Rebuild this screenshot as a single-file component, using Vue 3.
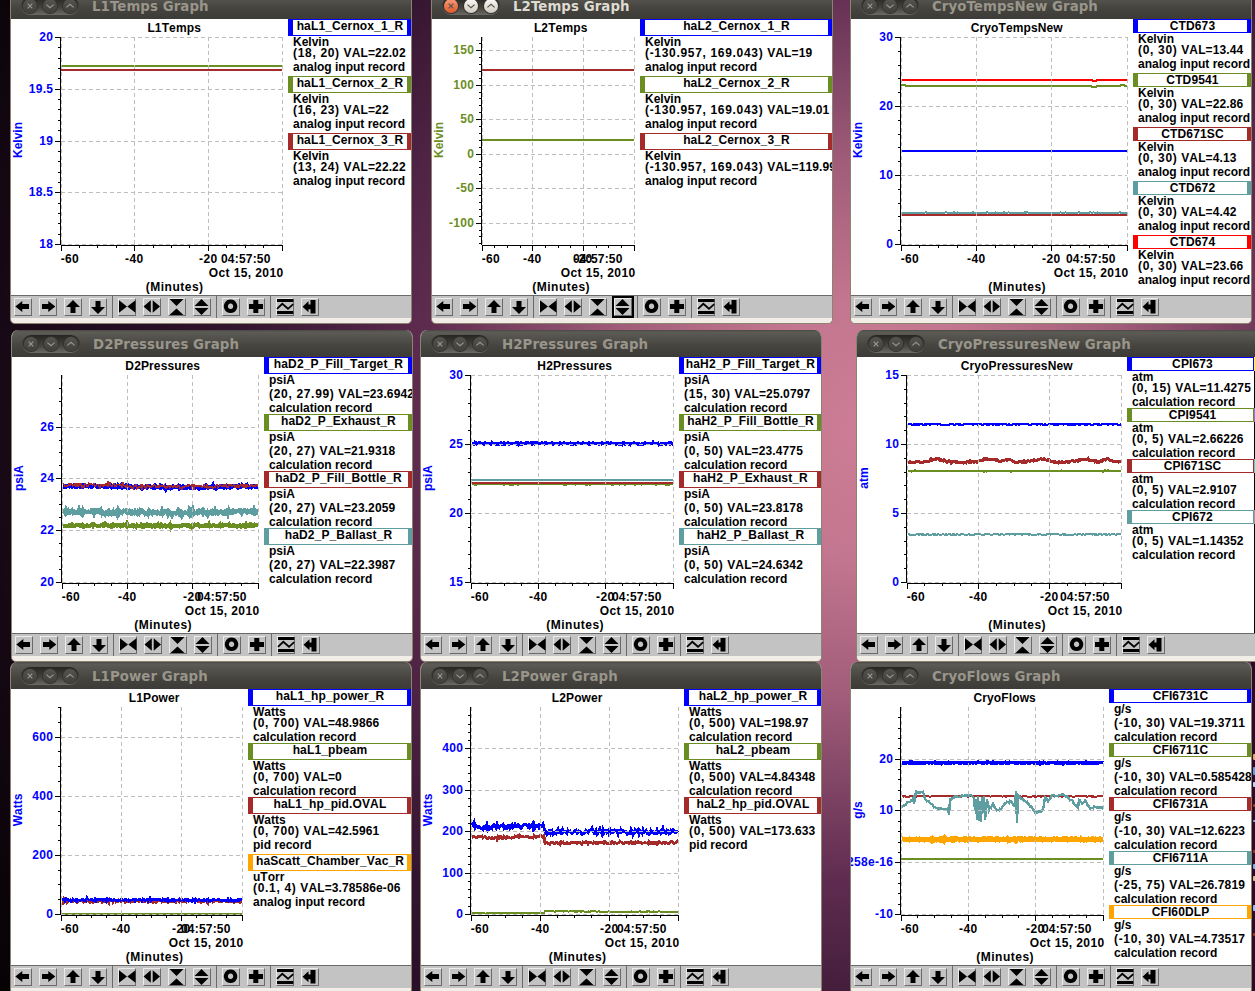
<template>
    <div class="desktop">
        <section
            v-for="win in windows"
            :key="win.name"
            class="window"
            :class="{ active: win.active }"
            :style="{ left: win.x + 'px', top: win.y + 'px', width: win.w + 'px' }"
        >
            <header class="titlebar">
                <div class="buttons">
                    <span class="round close">
                        <svg viewBox="0 0 14 14"><path d="M4.7 4.7l4.6 4.6M9.3 4.7l-4.6 4.6"/></svg>
                    </span>
                    <span class="round">
                        <svg viewBox="0 0 14 14"><path d="M3.4 5.6l3.6 3.2 3.6-3.2"/></svg>
                    </span>
                    <span class="round">
                        <svg viewBox="0 0 14 14"><path d="M3.4 8.4l3.6-3.2 3.6 3.2"/></svg>
                    </span>
                </div>
                <h1>{{ win.name }} Graph</h1>
            </header>

            <div class="content">
                <svg class="plot" :width="win.plot" height="276">
                    <text class="title" :x="(win.plot - 6 + 50) / 2 + 2.7" y="12.6" text-anchor="middle">{{ win.name }}</text>
                    <path
                        v-for="(t, i) in win.paths"
                        :key="i"
                        class="trace"
                        :d="t.d"
                        :stroke="t.color"
                        :stroke-width="t.width"
                    />
                    <path class="grid" :d="win.grid"/>
                    <path class="axis" :d="win.axis"/>
                    <text
                        v-for="l in win.yLabels"
                        :key="l.text"
                        class="label"
                        :fill="win.color"
                        x="42.4"
                        :y="l.y"
                        text-anchor="end"
                    >{{ l.text }}</text>
                    <text class="unit" :fill="win.color" transform="translate(11 121) rotate(-90)" text-anchor="middle">{{ win.unit }}</text>
                    <text class="label" x="49.7" y="244">-60</text>
                    <text class="label" :x="win.x40 + 0.3" y="244" text-anchor="middle">-40</text>
                    <text class="label" :x="win.x20 + 0.3" y="244" text-anchor="middle">-20</text>
                    <text class="time" :x="win.plot - 17.4" y="244" text-anchor="end">04:57:50</text>
                    <text class="date" :x="win.plot - 4.4" y="258" text-anchor="end">Oct 15, 2010</text>
                    <text class="minutes" :x="(win.plot - 6 + 50) / 2 + 3.2" y="272" text-anchor="middle">(Minutes)</text>
                </svg>
                <div class="legend" :class="{ wide: win.more }">
                    <div v-for="c in win.curves" :key="c.name" class="entry">
                        <div class="name" :class="{ tall: c.name.includes('_') }" :style="{ borderColor: c.color }">{{ c.name }}</div>
                        <div class="line" :class="{ tall: /[gp]/.test(win.unit) }">{{ c.unit || win.unit }}</div>
                        <div class="line tall"><span class="range">{{ c.range }}</span><span class="val">VAL={{ c.val }}</span></div>
                        <div class="line last" :class="{ tall: /[gp]/.test(c.record) }">{{ c.record }}</div>
                    </div>
                </div>
                <div v-if="win.more" class="more">
                    <i v-for="m in win.more" :key="m" :style="{ background: m }"></i>
                </div>
            </div>

            <footer class="toolbar">
                <div v-for="(group, g) in tools" :key="g" class="group">
                    <span v-for="tool in group" :key="tool.id" class="tool" :class="{ focused: win.active && tool.id === 'expand' }">
                        <svg viewBox="0 0 18 18">
                            <path v-if="tool.fill" :d="tool.fill" fill="#000"/>
                            <path v-if="tool.line" :d="tool.line" fill="none" stroke="#000" :stroke-width="tool.sw"/>
                        </svg>
                    </span>
                </div>
            </footer>
        </section>

        <!-- terminal behind, only its edge is visible -->
        <div class="terminal">
            <i v-for="s in specks" :key="s.y" :style="{ top: s.y + 'px', height: s.h + 'px', background: s.c }"></i>
        </div>
    </div>
</template>

<script setup>
const BLUE = '#0000ff'
const OLIVE = '#6b8e23'
const BROWN = '#a52a2a'
const TEAL = '#5f9ea0'
const ORANGE = '#ffa500'
const RED = '#ff0000'

const ANALOG = 'analog input record'
const CALC = 'calculation record'
const PID = 'pid record'

const TOP = 18
const BOTTOM = 225
const LEFT = 50

const tools = [
    [
        { id: 'left', fill: 'M1.3 8.5L8.3 3V6H15V11H8.3V14Z' },
        { id: 'right', fill: 'M16.3 8.5L9.3 3V6H3V11H9.3V14Z' },
        { id: 'up', fill: 'M9 2L16 9H11.5V15H6.5V9H2Z' },
        { id: 'down', fill: 'M9 16L2 9H6.5V3H11.5V9H16Z' },
    ],
    [
        { id: 'narrow', fill: 'M1 2.3V14.7L9 8.5ZM17.5 2.3V14.7L9.3 8.5Z' },
        { id: 'widen', fill: 'M0.5 8.5L7.8 2.3V14.7ZM17 8.5L9.7 2.3V14.7Z' },
        { id: 'shrink', fill: 'M1.5 1H15.5L8.5 8ZM1.5 17H15.5L8.5 10.5Z' },
        { id: 'expand', fill: 'M1.5 8L8.5 1L15.5 8ZM1.5 10H15.5L8.5 17Z' },
    ],
    [
        { id: 'circle', line: 'M8.6 3.6A4.7 4.7 0 1 1 8.5 3.6Z', sw: 4 },
        { id: 'plus', fill: 'M6.3 2H11.3V6H16V11H11.3V15H6.3V11H2V6H6.3Z' },
    ],
    [
        { id: 'wave', fill: 'M1 1H17.3V4H1ZM1 13H17.3V16H1Z', line: 'M1 10.8L6.3 5.8L12 10.8L17.2 6.2', sw: 1.8 },
        { id: 'last', fill: 'M1.5 8.8L7.5 3.3V6.5H9.5V2H14.5V15.5H9.5V11.3H7.5V14.3Z' },
    ],
]

// small deterministic generator so the traces look the same on every load
let seed = 7
const random = () => {
    seed = (seed * 16807) % 2147483647
    return seed / 2147483647
}

const trace = (points, end, amp) => {
    const pts = typeof points === 'number' ? [[LEFT, points], [end, points]] : points
    if (!amp) {
        return 'M' + pts.map((p) => p.join(' ')).join('L')
    }
    let d = ''
    let k = 0
    for (let x = LEFT + 1; x <= end; x++) {
        while (k < pts.length - 2 && pts[k + 1][0] < x) k++
        const [x0, y0] = pts[k]
        const [x1, y1] = pts[k + 1]
        const f = x1 === x0 ? 1 : Math.max(0, Math.min(1, (x - x0) / (x1 - x0)))
        const spike = random() > 0.88 ? 1.5 : 0.8
        const y = y0 + (y1 - y0) * f + (random() - 0.5) * 2 * amp * spike
        d += (d ? 'L' : 'M') + x + ' ' + y.toFixed(1)
    }
    return d
}

const graphs = [
    {
        name: 'L1Temps', x: 10, y: -8, plot: 277, unit: 'Kelvin', color: BLUE,
        min: 18, max: 20, major: [18, 18.5, 19, 19.5, 20], step: 0.1,
        traces: [[OLIVE, 47], [BROWN, 51]],
        curves: [
            { name: 'haL1_Cernox_1_R', color: BLUE, range: '(18, 20)', val: '22.02', record: ANALOG },
            { name: 'haL1_Cernox_2_R', color: OLIVE, range: '(16, 23)', val: '22', record: ANALOG },
            { name: 'haL1_Cernox_3_R', color: BROWN, range: '(13, 24)', val: '22.22', record: ANALOG },
        ],
    },
    {
        name: 'L2Temps', x: 431, y: -8, plot: 208, unit: 'Kelvin', color: OLIVE, active: true,
        min: -130.957, max: 169.043, major: [-100, -50, 0, 50, 100, 150], step: 10,
        traces: [[BROWN, 51], [OLIVE, 121]],
        curves: [
            { name: 'haL2_Cernox_1_R', color: BLUE, range: '(-130.957, 169.043)', val: '19', record: ANALOG },
            { name: 'haL2_Cernox_2_R', color: OLIVE, range: '(-130.957, 169.043)', val: '19.01', record: ANALOG },
            { name: 'haL2_Cernox_3_R', color: BROWN, range: '(-130.957, 169.043)', val: '119.99', record: ANALOG },
        ],
    },
    {
        name: 'CryoTempsNew', x: 850, y: -8, plot: 282, unit: 'Kelvin', color: BLUE,
        min: 0, max: 30, major: [0, 10, 20, 30], step: 2,
        traces: [
            [BLUE, 132],
            [OLIVE, [[50, 66], [54, 66], [55, 67], [240, 67], [241, 68], [245, 68], [246, 67], [269, 67], [270, 66], [273, 66], [274, 67], [276, 67]], 0, 2],
            [BROWN, 196],
            [TEAL, 193.8, 0.5, 2],
            [RED, [[50, 61], [241, 61], [242, 62], [245, 62], [246, 61], [276, 61]]],
        ],
        curves: [
            { name: 'CTD673', color: BLUE, range: '(0, 30)', val: '13.44', record: ANALOG },
            { name: 'CTD9541', color: OLIVE, range: '(0, 30)', val: '22.86', record: ANALOG },
            { name: 'CTD671SC', color: BROWN, range: '(0, 30)', val: '4.13', record: ANALOG },
            { name: 'CTD672', color: TEAL, range: '(0, 30)', val: '4.42', record: ANALOG },
            { name: 'CTD674', color: RED, range: '(0, 30)', val: '23.66', record: ANALOG },
        ],
    },
    {
        name: 'D2Pressures', x: 11, y: 330, plot: 252, unit: 'psiA', color: BLUE,
        min: 20, max: 27.99, major: [20, 22, 24, 26], step: 0.5,
        traces: [
            [BLUE, [[50, 129], [110, 129.5], [180, 130.5], [246, 129.5]], 1.3, 4],
            [OLIVE, 168.6, 1.3, 4],
            [BROWN, [[50, 127.8], [105, 128], [125, 129.5], [180, 129.5], [246, 128.3]], 2, 1.7],
            [TEAL, [[50, 154.4], [150, 155.6], [246, 154.8]], 2.4, 4],
        ],
        curves: [
            { name: 'haD2_P_Fill_Target_R', color: BLUE, range: '(20, 27.99)', val: '23.6942', record: CALC },
            { name: 'haD2_P_Exhaust_R', color: OLIVE, range: '(20, 27)', val: '21.9318', record: CALC },
            { name: 'haD2_P_Fill_Bottle_R', color: BROWN, range: '(20, 27)', val: '23.2059', record: CALC },
            { name: 'haD2_P_Ballast_R', color: TEAL, range: '(20, 27)', val: '22.3987', record: CALC },
        ],
    },
    {
        name: 'H2Pressures', x: 420, y: 330, plot: 258, unit: 'psiA', color: BLUE,
        min: 15, max: 30, major: [15, 20, 25, 30], step: 1,
        traces: [[BLUE, 86.5, 0.9, 3.2], [OLIVE, 127.3, 0.5, 2], [BROWN, 126], [TEAL, 123]],
        curves: [
            { name: 'haH2_P_Fill_Target_R', color: BLUE, range: '(15, 30)', val: '25.0797', record: CALC },
            { name: 'haH2_P_Fill_Bottle_R', color: OLIVE, range: '(0, 50)', val: '23.4775', record: CALC },
            { name: 'haH2_P_Exhaust_R', color: BROWN, range: '(0, 50)', val: '23.8178', record: CALC },
            { name: 'haH2_P_Ballast_R', color: TEAL, range: '(0, 50)', val: '24.6342', record: CALC },
        ],
    },
    {
        name: 'CryoPressuresNew', x: 856, y: 330, w: 420, plot: 270, unit: 'atm', color: BLUE,
        min: 0, max: 15, major: [0, 5, 10, 15], step: 1,
        more: ['#ffff00', '#9370db', '#40e0d0', '#bc8f8f'],
        traces: [
            [BLUE, 67.4, 0.5, 2.2],
            [OLIVE, 114, 0.4, 2.2],
            [BROWN, [[50, 105.5], [68, 104.7], [79, 101.7], [90, 104.7], [108, 105.5], [120, 104.7], [128, 101.7], [143, 104.2], [151, 102.5], [160, 105.2], [176, 103.7], [186, 101.7], [200, 105.5], [215, 104.5], [229, 102.2], [242, 105.2], [250, 101.9], [257, 104.7], [264, 104.5]], 0.8, 3],
            [TEAL, 177.4, 0.6, 2],
        ],
        curves: [
            { name: 'CPI673', color: BLUE, range: '(0, 15)', val: '11.4275', record: CALC },
            { name: 'CPI9541', color: OLIVE, range: '(0, 5)', val: '2.66226', record: CALC },
            { name: 'CPI671SC', color: BROWN, range: '(0, 5)', val: '2.9107', record: CALC },
            { name: 'CPI672', color: TEAL, range: '(0, 5)', val: '1.14352', record: CALC },
        ],
    },
    {
        name: 'L1Power', x: 10, y: 662, plot: 237, unit: 'Watts', color: BLUE,
        min: 0, max: 700, major: [0, 200, 400, 600], step: 50,
        traces: [[BROWN, 212.3, 1.5], [OLIVE, 225], [BLUE, 211, 1.4]],
        curves: [
            { name: 'haL1_hp_power_R', color: BLUE, range: '(0, 700)', val: '48.9866', record: CALC },
            { name: 'haL1_pbeam', color: OLIVE, range: '(0, 700)', val: '0', record: CALC },
            { name: 'haL1_hp_pid.OVAL', color: BROWN, range: '(0, 700)', val: '42.5961', record: PID },
            { name: 'haScatt_Chamber_Vac_R', color: ORANGE, unit: 'uTorr', range: '(0.1, 4)', val: '3.78586e-06', record: ANALOG },
        ],
    },
    {
        name: 'L2Power', x: 420, y: 662, plot: 263, unit: 'Watts', color: BLUE,
        min: 0, max: 499.9, major: [0, 100, 200, 300, 400], step: 20,
        traces: [
            [BLUE, [[50, 134.5], [58, 138], [80, 137.2], [123, 136.8], [124, 143.3], [257, 142.8]], 2.8, 3],
            [OLIVE, [[50, 224.2], [123, 224.2], [124, 222.3], [257, 222.8]], 0.4, 2],
            [BROWN, [[50, 147], [72, 149.3], [90, 148], [123, 147.8], [124, 154], [257, 153.6]], 1.5, 2.8],
        ],
        curves: [
            { name: 'haL2_hp_power_R', color: BLUE, range: '(0, 500)', val: '198.97', record: CALC },
            { name: 'haL2_pbeam', color: OLIVE, range: '(0, 500)', val: '4.84348', record: CALC },
            { name: 'haL2_hp_pid.OVAL', color: BROWN, range: '(0, 500)', val: '173.633', record: PID },
        ],
    },
    {
        name: 'CryoFlows', x: 850, y: 662, plot: 258, unit: 'g/s', color: BLUE,
        min: -10, max: 29.98, major: [-10, 0, 10, 20], step: 2,
        labels: { 0: '258e-16' },
        traces: [
            [BLUE, 73.8, 0.7, 3.5],
            [BROWN, 107.3, 0.5, 2],
            [OLIVE, 170],
            [TEAL, [[50, 119], [55, 115], [62, 110], [63, 114], [65, 103], [68, 104], [72, 102], [74, 110], [78, 113], [83, 118], [87, 120], [97, 120], [98, 126], [99, 111], [103, 108], [112, 107], [120, 106], [123, 108], [124, 122], [125, 110], [126, 132], [127, 107], [128, 133], [129, 111], [130, 133], [131, 108], [132, 123], [133, 108], [134, 131], [136, 110], [138, 120], [142, 115], [146, 122], [150, 120], [154, 114], [160, 112], [163, 116], [164, 116], [165, 102], [166, 134], [167, 107], [170, 109], [175, 113], [181, 119], [185, 124], [192, 121], [194, 108], [197, 112], [201, 106], [206, 107], [211, 105], [218, 109], [224, 115], [227, 119], [228, 111], [231, 115], [234, 112], [239, 119], [246, 118], [251, 119], [252, 117]], 1, 2.4],
            [ORANGE, 150.4, 0.8, 5],
        ],
        curves: [
            { name: 'CFI6731C', color: BLUE, range: '(-10, 30)', val: '19.3711', record: CALC },
            { name: 'CFI6711C', color: OLIVE, range: '(-10, 30)', val: '0.585428', record: CALC },
            { name: 'CFI6731A', color: BROWN, range: '(-10, 30)', val: '12.6223', record: CALC },
            { name: 'CFI6711A', color: TEAL, range: '(-25, 75)', val: '26.7819', record: CALC },
            { name: 'CFI60DLP', color: ORANGE, range: '(-10, 30)', val: '4.73517', record: CALC },
        ],
    },
]

const windows = graphs.map((g) => {
    const right = g.plot - 6
    const yOf = (v) => Math.round(BOTTOM - ((v - g.min) / (g.max - g.min)) * (BOTTOM - TOP))
    const xOf = (n) => Math.floor(LEFT + ((right - LEFT) * n) / 12)

    let grid = ''
    for (const v of g.major) grid += `M${LEFT} ${yOf(v) + 0.5}H${right}`
    for (const n of [0, 4, 8, 12]) grid += `M${xOf(n) + 0.5} ${TOP}V${BOTTOM}`

    let axis = `M49.5 ${TOP}V226M50 226.5H${right + 1}`
    for (const v of g.major) axis += `M44 ${yOf(v) + 0.5}H50`
    for (let k = Math.ceil(g.min / g.step - 0.001); k * g.step <= g.max + 0.001; k++) {
        axis += `M47 ${yOf(k * g.step) + 0.5}H50`
    }
    for (let n = 0; n <= 12; n++) axis += `M${xOf(n) + 0.5} 226V${n % 4 ? 229 : 232}`

    return {
        ...g,
        w: g.w || 402,
        grid,
        axis,
        x40: xOf(4),
        x20: xOf(8),
        yLabels: g.major.map((v) => ({ text: (g.labels && g.labels[v]) || String(v), y: yOf(v) + 4 })),
        paths: g.traces.map(([color, points, amp, width]) => ({
            color,
            width: width || (amp ? 2.6 : 2),
            d: trace(points, right, amp),
        })),
    }
})

const specks = [
    { y: 8, h: 6, c: '#e8a860' },
    { y: 21, h: 8, c: '#5a9fe0' },
    { y: 36, h: 5, c: '#b0d8ff' },
    { y: 58, h: 3, c: '#a03820' },
    { y: 74, h: 2, c: '#7fb0e8' },
    { y: 104, h: 3, c: '#a03820' },
    { y: 118, h: 5, c: '#6fb4f0' },
    { y: 130, h: 5, c: '#e0c090' },
    { y: 159, h: 6, c: '#8ac4ff' },
    { y: 187, h: 3, c: '#a03820' },
].map((s) => ({ ...s, y: s.y + 84 }))
</script>

<style>
body {
    margin: 0;
    overflow: hidden;
}
</style>

<style scoped>
.desktop {
    position: relative;
    width: 1255px;
    height: 991px;
    overflow: hidden;
    background: radial-gradient(circle at 870px 430px, #cd7e96 0, #c3768f 130px, #a05c79 270px, #5f2c50 450px, #32142e 640px, #1d0b1c 820px, #0a0408 980px, #000 1100px);
    font: bold 12px/12px "Liberation Sans", Arial, sans-serif;
    font-kerning: none;
    color: #000;
}

.window {
    position: absolute;
    box-sizing: border-box;
    height: 332px;
    display: flex;
    flex-direction: column;
    border: 1px solid #8b8370;
    border-top: 0;
    border-radius: 7px 7px 5px 5px;
    background: #f2ede6;
    overflow: hidden;
    z-index: 1;
}

.titlebar {
    flex: none;
    height: 27px;
    margin: 0 -1px;
    display: flex;
    align-items: center;
    gap: 13px;
    padding-left: 11px;
    background: linear-gradient(#4a4843 0, #5c5b55 2px, #45443f 60%, #3c3b37 100%);
}

.buttons {
    display: flex;
    align-items: center;
    box-sizing: border-box;
    width: 58px;
    height: 18px;
    gap: 6px;
    padding: 0 2px;
    border-radius: 9px;
    background: linear-gradient(#262521, #45443f 60%, #6b6a65);
}

.round {
    width: 14px;
    height: 14px;
    border-radius: 50%;
    background: linear-gradient(#55544f, #403f3b);
    box-shadow: 0 0 0 1px #32312d;
}

.round svg {
    display: block;
    fill: none;
    stroke: #9a968c;
    stroke-width: 1.2;
}

.active .round {
    background: linear-gradient(#fbf9f6, #cfc9bf);
}

.active .round svg {
    stroke: #55534c;
}

.active .close {
    background: linear-gradient(#f89b77, #e0582b);
}

h1 {
    margin: 0;
    padding-top: 2px;
    font: bold 13.33px/20px "DejaVu Sans", sans-serif;
    letter-spacing: 0.07px;
    color: #99958b;
    white-space: nowrap;
}

.active h1 {
    color: #dfdbd2;
}

.content {
    flex: none;
    display: flex;
    height: 276px;
    background: #fff;
    overflow: hidden;
}

.plot {
    flex: none;
    display: block;
    overflow: hidden;
}

.label {
    letter-spacing: 0.35px;
}

.time {
    letter-spacing: 0.2px;
}

.date {
    letter-spacing: 0.4px;
}

.minutes {
    letter-spacing: 0.5px;
}

.title {
    letter-spacing: 0.12px;
}

.trace {
    fill: none;
    shape-rendering: crispEdges;
}

.grid {
    fill: none;
    stroke: #bebebe;
    stroke-dasharray: 4 3;
    shape-rendering: crispEdges;
}

.axis {
    fill: none;
    stroke: #000;
    shape-rendering: crispEdges;
}

.legend {
    flex: 1;
    min-width: 0;
    overflow: hidden;
    white-space: nowrap;
}

.legend.wide {
    flex: none;
    width: 127px;
}

.name {
    box-sizing: border-box;
    height: 14px;
    border: 1px solid;
    border-width: 1px 4px 1px 5px;
    display: flex;
    justify-content: center;
    letter-spacing: 0.13px;
}

.wide .name {
    border-right-width: 1px;
}

.name.tall {
    height: 17px;
}

.line {
    height: 11px;
    padding-left: 5px;
}

.line.tall {
    height: 14px;
}

.last {
    margin-bottom: 1px;
}

.range {
    letter-spacing: 0.68px;
    margin-right: 3.8px;
}

.val {
    letter-spacing: 0.12px;
}

.more {
    flex: none;
    width: 30px;
    background: #000;
}

.more i {
    display: block;
    height: 14px;
    margin-bottom: 37px;
}

.toolbar {
    flex: none;
    display: flex;
    box-sizing: border-box;
    height: 23px;
    padding-left: 1px;
    border-top: 1px solid #6a6a6a;
    background: #c3c3c3;
}

.group {
    display: flex;
    align-items: center;
    gap: 7px;
    padding: 0 5px 0 2px;
    border-right: 1px solid #6a6a6a;
}

.group + .group {
    padding-left: 5px;
}

.group:last-child {
    border-right: 0;
}

.tool {
    box-sizing: border-box;
    width: 18px;
    height: 18px;
    border: 1px solid;
    border-color: #ececec #6a6a6a #6a6a6a #ececec;
}

.tool svg {
    display: block;
    width: 18px;
    height: 18px;
    margin: -1px;
}

.focused {
    outline: 2px solid #000;
    outline-offset: 0;
}

.terminal {
    position: absolute;
    left: 1251px;
    top: 662px;
    width: 4px;
    height: 329px;
    background: #2c0a28;
}

.terminal i {
    position: absolute;
    right: 0;
    width: 2px;
    border-radius: 1px 0 0 1px;
}
</style>
